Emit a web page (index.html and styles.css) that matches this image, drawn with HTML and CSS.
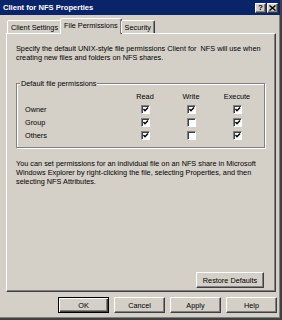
FILE: index.html
```html
<!DOCTYPE html>
<html lang="en">
<head>
  <meta charset="UTF-8">
  <title>Client for NFS Properties</title>
  <link rel="stylesheet" href="styles.css">
</head>
<body>
  <div class="dialog">
    <div class="titlebar">
      <span class="title">Client for NFS Properties</span>
      <div class="caption-btns">
        <button class="cap-btn">?</button>
        <button class="cap-btn">
          <svg viewBox="0 0 7 6" width="7" height="6"><path d="M0.5 0.5 L6.5 5.5 M6.5 0.5 L0.5 5.5" stroke="#000" stroke-width="1.4"/></svg>
        </button>
      </div>
    </div>

    <div class="tabs">
      <div class="tab">Client Settings</div>
      <div class="tab active">File Permissions</div>
      <div class="tab">Security</div>
    </div>

    <div class="panel">
      <p class="intro">Specify the default UNIX-style file permissions Client for&nbsp; NFS will use when<br>creating new files and folders on NFS shares.</p>

      <fieldset class="group">
        <legend>Default file permissions</legend>
        <div class="perm-grid">
          <span></span>
          <span class="col-head">Read</span>
          <span class="col-head">Write</span>
          <span class="col-head">Execute</span>

          <span class="row-label">Owner</span>
          <span class="cell"><span class="check on"></span></span>
          <span class="cell"><span class="check on"></span></span>
          <span class="cell"><span class="check on"></span></span>

          <span class="row-label">Group</span>
          <span class="cell"><span class="check on"></span></span>
          <span class="cell"><span class="check"></span></span>
          <span class="cell"><span class="check on"></span></span>

          <span class="row-label">Others</span>
          <span class="cell"><span class="check on"></span></span>
          <span class="cell"><span class="check"></span></span>
          <span class="cell"><span class="check on"></span></span>
        </div>
      </fieldset>

      <p class="note">You can set permissions for an individual file on an NFS share in Microsoft<br>Windows Explorer by right-clicking the file, selecting Properties, and then<br>selecting NFS Attributes.</p>

      <div class="panel-actions">
        <button class="btn restore">Restore Defaults</button>
      </div>
    </div>

    <div class="actions">
      <button class="btn default">OK</button>
      <button class="btn">Cancel</button>
      <button class="btn">Apply</button>
      <button class="btn">Help</button>
    </div>
  </div>
</body>
</html>
```

FILE: styles.css
```css
:root {
  --face: #d4d0c8;
  --shadow: #808080;
  --dark: #404040;
  --light: #ffffff;
  --title: #0a246a;
}
* {
  margin: 0;
  padding: 0;
  box-sizing: border-box;
}
body {
  font-family: 'Liberation Sans', Arial, sans-serif;
  font-size: 7.3px;
  color: #000;
  background: var(--face);
}
.dialog {
  width: 282px;
  height: 320px;
  background: var(--face);
  border-right: 2px solid var(--dark);
  border-bottom: 2px solid var(--dark);
  box-shadow: inset -1px -1px 0 var(--shadow);
  display: flex;
  flex-direction: column;
}
.titlebar {
  height: 15px;
  background: var(--title);
  color: var(--light);
  display: flex;
  align-items: center;
  justify-content: space-between;
  padding: 0 2px 0 3px;
}
.title {
  font-weight: 700;
  font-size: 7.6px;
}
.caption-btns {
  display: flex;
  gap: 1px;
}
.cap-btn {
  width: 11px;
  height: 10px;
  background: var(--face);
  border: 1px solid;
  border-color: var(--light) var(--dark) var(--dark) var(--light);
  box-shadow: inset -1px -1px 0 var(--shadow);
  font-family: 'Liberation Sans', Arial, sans-serif;
  font-weight: 700;
  font-size: 8px;
  line-height: 7px;
  display: flex;
  align-items: center;
  justify-content: center;
  color: #000;
}
.tabs {
  display: flex;
  align-items: flex-end;
  height: 18px;
  padding-left: 7px;
  position: relative;
  z-index: 1;
}
.tab {
  height: 13px;
  padding: 0 3px;
  display: flex;
  align-items: center;
  border: 1px solid;
  border-bottom: none;
  border-color: var(--light) var(--dark) transparent var(--light);
  box-shadow: inset -1px 0 0 var(--shadow);
  border-radius: 2px 2px 0 0;
  background: var(--face);
}
.tab.active {
  height: 16px;
  margin: 0 -2px -1px;
  padding: 0 3px 2px;
}
.tab.active + .tab {
  margin-left: 1px;
}
.panel {
  flex: 1;
  margin: 0 4px 0 6px;
  border: 1px solid;
  border-color: var(--light) var(--dark) var(--dark) var(--light);
  box-shadow: inset -1px -1px 0 var(--shadow);
  padding: 10px 10px 3px 9px;
  display: flex;
  flex-direction: column;
  line-height: 9px;
}
.intro {
  margin-bottom: 17px;
}
.group {
  border: 1px solid var(--shadow);
  box-shadow: inset 1px 1px 0 var(--light), 1px 1px 0 var(--light);
  padding: 2px 4px 5px 8px;
  min-width: 0;
}
.group legend {
  padding: 0 1px;
  margin-left: -5px;
  line-height: 9px;
  background: var(--face);
}
.perm-grid {
  display: grid;
  grid-template-columns: 1fr 46px 46px 46px;
  grid-auto-rows: 13px;
  align-items: center;
}
.col-head,
.cell {
  text-align: center;
}
.cell {
  display: flex;
  justify-content: center;
}
.check {
  width: 9px;
  height: 9px;
  background: var(--light);
  border: 1px solid;
  border-color: var(--shadow) var(--light) var(--light) var(--shadow);
  box-shadow: inset 1px 1px 0 var(--dark);
  display: block;
}
.check.on {
  background: var(--light) url("data:image/svg+xml;utf8,<svg xmlns='http://www.w3.org/2000/svg' viewBox='0 0 7 7'><path d='M1.5 3 L3 4.8 L6 1.5' fill='none' stroke='black' stroke-width='1.4'/></svg>") no-repeat center / 7px 7px;
}
.note {
  margin-top: 11px;
}
.panel-actions {
  margin-top: auto;
  display: flex;
  justify-content: flex-end;
  padding-right: 1px;
}
.btn {
  height: 16px;
  width: 51px;
  background: var(--face);
  border: 1px solid;
  border-color: var(--light) var(--dark) var(--dark) var(--light);
  box-shadow: inset -1px -1px 0 var(--shadow);
  font-family: 'Liberation Sans', Arial, sans-serif;
  font-size: 7.3px;
  color: #000;
}
.btn.restore {
  width: 68px;
}
.btn.default {
  border: 1px solid #000;
  box-shadow: inset 1px 1px 0 var(--light), inset -1px -1px 0 var(--dark), inset -2px -2px 0 var(--shadow);
}
.actions {
  height: 26px;
  padding: 5px 3px 5px 0;
  display: flex;
  justify-content: flex-end;
  gap: 5px;
}
```
